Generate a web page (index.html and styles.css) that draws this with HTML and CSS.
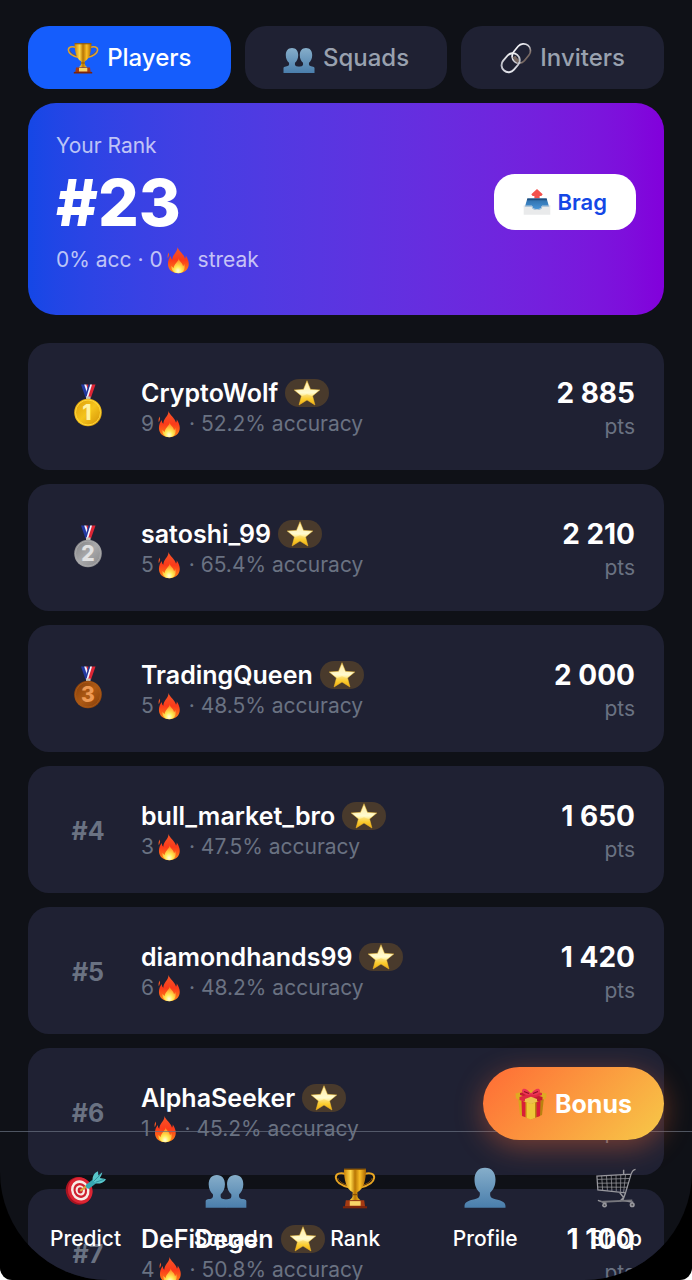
FILE: index.html
```
<!DOCTYPE html>
<html lang="en">
<head>
  <meta charset="UTF-8">
  <meta name="viewport" content="width=device-width, initial-scale=1.0">
  <title>Leaderboard</title>
  <link rel="stylesheet" href="styles.css">
</head>
<body>

  <!-- icons -->
  <svg class="sprite" aria-hidden="true">
    <defs>
      <linearGradient id="gold" x1="0" x2="1" y1="0" y2="0">
        <stop offset="0" stop-color="#c98208"/>
        <stop offset=".3" stop-color="#ffd84a"/>
        <stop offset=".5" stop-color="#b87503"/>
        <stop offset=".72" stop-color="#f9bd25"/>
        <stop offset="1" stop-color="#a96500"/>
      </linearGradient>
      <linearGradient id="bust" x1="0" x2="0" y1="0" y2="1">
        <stop offset="0" stop-color="#86aeca"/>
        <stop offset="1" stop-color="#4a7eac"/>
      </linearGradient>
      <linearGradient id="flame" x1="0" x2="0" y1="0" y2="1">
        <stop offset="0" stop-color="#f4582a"/>
        <stop offset=".5" stop-color="#fb3a1a"/>
        <stop offset="1" stop-color="#ff8a16"/>
      </linearGradient>
      <radialGradient id="flame-in" cx=".5" cy=".85" r=".8">
        <stop offset="0" stop-color="#fffde0"/>
        <stop offset=".35" stop-color="#ffec54"/>
        <stop offset="1" stop-color="#ff7a1c"/>
      </radialGradient>
      <linearGradient id="starfill" x1="0" x2="0" y1="0" y2="1">
        <stop offset="0" stop-color="#ffe9a0"/>
        <stop offset=".5" stop-color="#fffbd0"/>
        <stop offset=".75" stop-color="#ffd83c"/>
        <stop offset="1" stop-color="#f0a80c"/>
      </linearGradient>
      <linearGradient id="silver-link" x1="0" x2="1" y1="0" y2="1">
        <stop offset="0" stop-color="#ffffff"/>
        <stop offset=".5" stop-color="#b9bbc4"/>
        <stop offset="1" stop-color="#f1f2f8"/>
      </linearGradient>
      <linearGradient id="dark-link" x1="0" x2="1" y1="0" y2="0">
        <stop offset="0" stop-color="#f4f4f8"/>
        <stop offset=".6" stop-color="#c9c9d0"/>
        <stop offset="1" stop-color="#75655e"/>
      </linearGradient>
      <linearGradient id="m-gold" x1="0" x2="1" y1="0" y2="1">
        <stop offset="0" stop-color="#d99a08"/>
        <stop offset=".5" stop-color="#f5c41c"/>
        <stop offset="1" stop-color="#d08d04"/>
      </linearGradient>
      <linearGradient id="m-silver" x1="0" x2="1" y1="0" y2="1">
        <stop offset="0" stop-color="#7d7d7f"/>
        <stop offset=".5" stop-color="#a9a9ab"/>
        <stop offset="1" stop-color="#848486"/>
      </linearGradient>
      <linearGradient id="m-bronze" x1="0" x2="1" y1="0" y2="1">
        <stop offset="0" stop-color="#7d3807"/>
        <stop offset=".5" stop-color="#ae5a14"/>
        <stop offset="1" stop-color="#813a08"/>
      </linearGradient>
      <linearGradient id="tray" x1="0" x2="0" y1="0" y2="1">
        <stop offset="0" stop-color="#2d6ca8"/>
        <stop offset="1" stop-color="#4d9ee2"/>
      </linearGradient>
    </defs>

    <symbol id="i-trophy" viewBox="0 0 32 32">
      <path d="M9 5.500C5 3.800 1 5 1.400 8.200 1.900 12.300 7.600 14.600 12 15.600M23 5.500C27 3.800 31 5 30.600 8.200 30.100 12.300 24.400 14.600 20 15.600" fill="none" stroke="#e8a522" stroke-width="1.500"/>
      <path d="M3 8.500C3.500 11 7 13 10.500 14M29 8.500C28.500 11 25 13 21.500 14" fill="none" stroke="#9a5a08" stroke-width=".7"/>
      <path d="M7.600 1.500h16.800c0 8-1.700 15.500-6.600 17.700v2.300c0 1.500.8 2.800 2.700 4.100h-9c1.900-1.300 2.700-2.600 2.700-4.100v-2.300C9.300 17 7.600 9.500 7.600 1.500z" fill="url(#gold)"/>
      <path d="M7.600 1.200h16.800v1.100H7.600z" fill="#8f5905"/>
      <path d="M14 20.500h4v1h-4z" fill="#8a5205"/>
      <path d="M9 25.400h14l.7 4.800H8.300z" fill="#a53a12"/>
      <path d="M12 26h8.300v3.500H12z" fill="#f7d568"/>
      <path d="M6.800 29.900h18.400v1.600H6.800z" fill="#7d250b"/>
    </symbol>

    <symbol id="i-squad" viewBox="0 0 32 32">
      <path d="M9 6c4 0 6.200 2.800 6.200 7.200 0 3.600-1.500 6-3.200 7.500-.4 2.600.3 3.500 3 3.800.8.100 1.200.1 1.200.5V31H.5v-5c0-1 1-1.400 2.500-1.600 2.600-.3 3.500-1.200 3-3.700-1.700-1.500-3.200-3.900-3.200-7.500C2.800 8.800 5 6 9 6z" fill="url(#bust)"/>
      <path d="M23 6c4 0 6.200 2.800 6.200 7.200 0 3.600-1.500 6-3.200 7.500-.4 2.500.4 3.400 3 3.700 1.500.2 2.500.6 2.500 1.600v5H16v-6c0-.4.3-.4 1.100-.5 2.600-.3 3.300-1.200 2.900-3.800-1.700-1.500-3.200-3.900-3.200-7.500C16.800 8.800 19 6 23 6z" fill="url(#bust)"/>
    </symbol>

    <symbol id="i-person" viewBox="0 0 32 32">
      <path d="M16 .5c5.100 0 8 3.500 8 9 0 4.700-1.700 8-4 9.900-.4 3 .4 4.300 4 5.100 4.700 1 7.600 2.100 7.600 5.200V31H.4v-1.300c0-3.100 2.900-4.200 7.600-5.200 3.600-.8 4.400-2.100 4-5.100-2.300-1.900-4-5.200-4-9.900 0-5.500 2.900-9 8-9z" fill="url(#bust)"/>
    </symbol>

    <symbol id="i-link" viewBox="0 0 32 32">
      <g fill="none" stroke-width="1.700">
        <rect x="14.300" y="1" width="14" height="21" rx="7" transform="rotate(40 21.300 11.500)" stroke="url(#dark-link)"/>
        <path d="M14 14.500c1 2 2.500 4 4.500 5" stroke="#75655e" stroke-width="3.500"/>
        <rect x="3.700" y="10.500" width="14" height="20.500" rx="7" transform="rotate(40 10.700 20.700)" stroke="url(#silver-link)" stroke-width="1.900"/>
      </g>
    </symbol>

    <symbol id="i-outbox" viewBox="0 0 32 32">
      <path d="M16 1l6.500 6-1.500 2h-2v3h-6V9h-2L9.500 7z" fill="#f4524d"/>
      <path d="M5 12h22l3 10-8 5H10L2 22z" fill="url(#tray)"/>
      <path d="M5 12h22l.6 2H4.400z" fill="#1f4f80"/>
      <path d="M.8 21h9c.7 3 3.200 4.200 6.200 4.200s5.500-1.200 6.200-4.200h9v9.500H.8z" fill="#e9eaeb"/>
      <path d="M.8 20.600h9.500c.3 3 2.700 4 5.700 4s5.400-1 5.700-4h9.500" fill="none" stroke="#d1d5d9"/>
    </symbol>

    <symbol id="i-fire" viewBox="0 0 32 32">
      <path d="M15.500 1c1 4.500 7.500 8 8.500 13.500.7-1 1-2.200.8-3.700C27 14 28.300 17.300 28.300 20.500 28.300 27 23 31 16.300 31S4.500 27 4.500 20.500c0-3.500 1.300-6.500 3.300-9 0 2 .5 3.300 1.700 4.200C9.500 9.500 15.500 7 15.500 1z" fill="url(#flame)"/>
      <path d="M5.500 7.500c-1.500 2.500-1.700 4-1.200 6.500C5.500 12 6.300 10 5.500 7.500z" fill="#ef5624"/>
      <path d="M17 14c0 4 4.500 5 4.700 9 .8-.7 1.300-1.500 1.500-2.500 1.500 6-1 10.500-6.700 10.500s-8.500-3.500-8-8.500c.7 1.200 1.500 2 2.700 2.500C11.200 21 16 18.500 17 14z" fill="url(#flame-in)"/>
    </symbol>

    <symbol id="i-star" viewBox="0 0 32 32">
      <path d="M16 .8l4.300 10.700 11.500.7-8.900 7.400 2.900 11.200L16 24.700l-9.800 6.100 2.900-11.200L.2 12.200l11.500-.7z" fill="url(#starfill)" stroke="#edb830" stroke-width=".6" stroke-linejoin="round"/>
      <path d="M16 17.500L9.500 20 6.200 30.800 16 24.700l9.800 6.100L22.500 20z" fill="#f2b616" opacity=".3"/>
    </symbol>

    <symbol id="i-ribbon" viewBox="0 0 32 44">
      <path d="M9 .5h4l5 13h-4.500z" fill="#2238a0"/>
      <path d="M12.200.500h2.300l4 11-2 2z" fill="#eff0ff"/>
      <path d="M14.300.500h1.900l2.300 7-1 3z" fill="#d92733"/>
      <path d="M23.500.500h-4l-5 13H19z" fill="#df2635"/>
      <path d="M20 .500h-2l-4 13h2z" fill="#f3f3ff"/>
      <path d="M18 .500h-1.400l-3 10 .9 2.500z" fill="#1d3698"/>
      <path d="M14 12.500h4.500v3H14z" fill="#c7c3ba"/>
    </symbol>

    <symbol id="i-gift" viewBox="0 0 32 32">
      <path d="M3 9l13 6v16.500L5 27z" fill="#d9a51c"/>
      <path d="M29 9l-13 6v16.500L27 27z" fill="#b8820f"/>
      <path d="M.500 5.500L15 2l16.500 3.500-.5 5-15 5.500L1 10.500z" fill="#e0aa22"/>
      <path d="M6.500 12.500l4 1.800v15l-3.500-1.400zM25.500 12.500l-4 1.800v15l3.500-1.400z" fill="#d91d37"/>
      <path d="M12 14.500l4 1.500 4-1.500V30l-4 1.500L12 30z" fill="#efc638"/>
      <path d="M5 5l5-1.200L27.500 9v3l-4 1.300L5 7z" fill="#c51a32"/>
      <path d="M27 5l-5-1.200L4.500 9v3l4 1.300L27 7z" fill="#df2843"/>
      <path d="M16 5.500C12 0 7.500-.500 7 2.500S11 8 16 6.500c5 1.500 9.500-1 9-4S20 0 16 5.500z" fill="#ed3554"/>
      <path d="M9 3.500l5 2M23 3.500l-5 2" stroke="#8d1024" stroke-width="1.200"/>
      <path d="M10 11l6-2.300L22 11v2.500L16 16l-6-2.500z" fill="#edc14b"/>
    </symbol>

    <symbol id="i-target" viewBox="0 0 44 38">
      <ellipse cx="14.500" cy="22" rx="13.500" ry="14.700" transform="rotate(-25 14.500 22)" fill="#a71320"/>
      <ellipse cx="16" cy="21.500" rx="12.700" ry="14" transform="rotate(-25 16 21.500)" fill="#dc2533"/>
      <ellipse cx="16" cy="21.500" rx="9.500" ry="10.800" transform="rotate(-25 16 21.500)" fill="#f7ece6"/>
      <ellipse cx="16" cy="21.500" rx="7" ry="8" transform="rotate(-25 16 21.500)" fill="#cf202f"/>
      <ellipse cx="16" cy="21.500" rx="4.800" ry="5.500" transform="rotate(-25 16 21.500)" fill="#f7ece6"/>
      <ellipse cx="16" cy="21.500" rx="2.700" ry="3.200" fill="#cb1d2c"/>
      <path d="M16 22l8-6" stroke="#d8a43b" stroke-width="2.200"/>
      <path d="M22 15.500l8.500-6.500 3.500 4-8.500 6.500c-2 1-4.500-2-3.500-4z" fill="#36a6b0"/>
      <path d="M29 11c-.5-4 1.500-8 5.500-9.500L35 6l4-3.500c-.5 2.500-1 4-2.500 6 2 .3 4 .4 6.500 1.500-3.500 4-7.500 5-11 4z" fill="#58c6cb"/>
      <path d="M30 12l7-7M32 13l9-3" stroke="#23848f" stroke-width=".8"/>
    </symbol>

    <symbol id="i-cart" viewBox="0 0 44 44">
      <g fill="none" stroke="#97979d" stroke-width="1.300">
        <path d="M42.500 2.500c-3.500.5-4 3-5 6L32 27 3 24 2 9.500l36-2"/>
        <path d="M2.300 13l34.400-1M2.500 17l33-.3M2.700 21l31.500.2" stroke-width=".8"/>
        <path d="M7 9.200l1 15.300M12 9l1 15.800M17 8.700l.7 16.500M22 8.500l.3 17M27 8.200l-.3 17.800M32 8l-2 18.500" stroke-width=".8"/>
        <path d="M30 3v5M26 27l4 5-4 4M32 27l-3 8M29 35l11 2M3 35l9 3" stroke-width="1.500"/>
      </g>
      <path d="M4 35.500l35-1.500v2L9 37.500z" fill="#77777d"/>
      <circle cx="10" cy="40" r="2.500" fill="#98989e"/>
      <circle cx="39" cy="39.500" r="2.700" fill="#98989e"/>
      <circle cx="10" cy="40" r=".9" fill="#4c4c51"/>
      <circle cx="39" cy="39.500" r="1" fill="#4c4c51"/>
    </symbol>
  </svg>

  <div class="device">
    <div class="screen">

      <main class="content">
        <!-- tabs -->
        <div class="tabs">
          <button class="tab active" type="button"><svg class="emoji"><use href="#i-trophy"/></svg>Players</button>
          <button class="tab" type="button"><svg class="emoji"><use href="#i-squad"/></svg>Squads</button>
          <button class="tab" type="button"><svg class="emoji"><use href="#i-link"/></svg>Inviters</button>
        </div>

        <!-- your rank -->
        <section class="my_rank">
          <div class="my_info">
            <p class="my_label">Your Rank</p>
            <p class="my_place">#23</p>
            <p class="my_label">0% acc · 0<svg class="fire"><use href="#i-fire"/></svg> streak</p>
          </div>
          <button class="brag" type="button"><svg class="emoji"><use href="#i-outbox"/></svg>Brag</button>
        </section>

        <!-- leaderboard -->
        <ol class="list">
          <li class="row">
            <div class="place">
              <svg class="medal" viewBox="0 0 32 44">
                <use href="#i-ribbon"/>
                <circle cx="16" cy="28.500" r="13.800" fill="url(#m-gold)"/>
                <circle cx="16" cy="28.500" r="12.500" fill="none" stroke="#ffd83e"/>
                <text x="15" y="36" fill="#fff3a4">1</text>
              </svg>
            </div>
            <div class="info">
              <p class="name">CryptoWolf <span class="badge"><svg><use href="#i-star"/></svg></span></p>
              <p class="stats">9<svg class="fire"><use href="#i-fire"/></svg> · 52.2% accuracy</p>
            </div>
            <div class="score"><p class="points">2 885</p><p class="pts">pts</p></div>
          </li>
          <li class="row">
            <div class="place">
              <svg class="medal" viewBox="0 0 32 44">
                <use href="#i-ribbon"/>
                <circle cx="16" cy="28.500" r="13.800" fill="url(#m-silver)"/>
                <circle cx="16" cy="28.500" r="12.500" fill="none" stroke="#a9a9ab"/>
                <text x="16" y="36" fill="#e2e2e3">2</text>
              </svg>
            </div>
            <div class="info">
              <p class="name">satoshi_99 <span class="badge"><svg><use href="#i-star"/></svg></span></p>
              <p class="stats">5<svg class="fire"><use href="#i-fire"/></svg> · 65.4% accuracy</p>
            </div>
            <div class="score"><p class="points">2 210</p><p class="pts">pts</p></div>
          </li>
          <li class="row">
            <div class="place">
              <svg class="medal" viewBox="0 0 32 44">
                <use href="#i-ribbon"/>
                <circle cx="16" cy="28.500" r="13.800" fill="url(#m-bronze)"/>
                <circle cx="16" cy="28.500" r="12.500" fill="none" stroke="#a85818"/>
                <text x="16" y="36" fill="#ee9a55">3</text>
              </svg>
            </div>
            <div class="info">
              <p class="name">TradingQueen <span class="badge"><svg><use href="#i-star"/></svg></span></p>
              <p class="stats">5<svg class="fire"><use href="#i-fire"/></svg> · 48.5% accuracy</p>
            </div>
            <div class="score"><p class="points">2 000</p><p class="pts">pts</p></div>
          </li>
          <li class="row">
            <div class="place">#4</div>
            <div class="info">
              <p class="name">bull_market_bro <span class="badge"><svg><use href="#i-star"/></svg></span></p>
              <p class="stats">3<svg class="fire"><use href="#i-fire"/></svg> · 47.5% accuracy</p>
            </div>
            <div class="score"><p class="points">1 650</p><p class="pts">pts</p></div>
          </li>
          <li class="row">
            <div class="place">#5</div>
            <div class="info">
              <p class="name">diamondhands99 <span class="badge"><svg><use href="#i-star"/></svg></span></p>
              <p class="stats">6<svg class="fire"><use href="#i-fire"/></svg> · 48.2% accuracy</p>
            </div>
            <div class="score"><p class="points">1 420</p><p class="pts">pts</p></div>
          </li>
          <li class="row">
            <div class="place">#6</div>
            <div class="info">
              <p class="name">AlphaSeeker <span class="badge"><svg><use href="#i-star"/></svg></span></p>
              <p class="stats">1<svg class="fire"><use href="#i-fire"/></svg> · 45.2% accuracy</p>
            </div>
            <div class="score"><p class="points"></p><p class="pts">pts</p></div>
          </li>
          <li class="row">
            <div class="place">#7</div>
            <div class="info">
              <p class="name">DeFiDegen <span class="badge"><svg><use href="#i-star"/></svg></span></p>
              <p class="stats">4<svg class="fire"><use href="#i-fire"/></svg> · 50.8% accuracy</p>
            </div>
            <div class="score"><p class="points">1 100</p><p class="pts">pts</p></div>
          </li>
        </ol>
      </main>

      <!-- bottom nav -->
      <nav class="bottom_nav">
        <a href="#predict"><svg><use href="#i-target"/></svg>Predict</a>
        <a href="#squad"><svg><use href="#i-squad"/></svg>Squad</a>
        <a href="#rank"><svg><use href="#i-trophy"/></svg>Rank</a>
        <a href="#profile"><svg><use href="#i-person"/></svg>Profile</a>
        <a href="#shop"><svg><use href="#i-cart"/></svg>Shop</a>
      </nav>

      <button class="bonus" type="button"><svg class="emoji"><use href="#i-gift"/></svg>Bonus</button>
    </div>
  </div>

</body>
</html>
```
FILE: styles.css
```
:root {
    --bg: #0f1117;
    --card: #1f2133;
    --muted: #6a7282;
    --tab-font: #99a1af;
    --blue: #155dfc;
}

* {box-sizing: border-box; margin: 0; padding: 0;}
html {background: #fff;}
body {font-family: Inter, "Liberation Sans", sans-serif; color: #fff;}
button {border: 0; font-family: inherit; cursor: pointer;}
a {color: inherit; text-decoration: none;}
.sprite {position: absolute; width: 0; height: 0;}

/* device */
.device {height: 100vh; background: #000; border-radius: 0 0 12px 12px; overflow: hidden;}
.screen {position: relative; height: 100%; background: var(--bg); border-radius: 0 0 108px 108px; overflow: hidden;}
.content {padding: 26px 28px 0;}

.emoji {width: 32px; height: 32px; flex: none;}
.fire {width: 28px; height: 28px; margin: -4px 0 -4px 1px; vertical-align: -3px;}

/* tabs */
.tabs {display: grid; grid-template-columns: repeat(3, 1fr); gap: 14px;}
.tab {display: flex; align-items: center; justify-content: center; gap: 8px; height: 63px; border-radius: 21px; background: var(--card); color: var(--tab-font); font-size: 24px; font-weight: 500;}
.tab.active {background: var(--blue); color: #fff;}

/* your rank */
.my_rank {display: flex; justify-content: space-between; align-items: flex-start; margin-top: 14px; padding: 29px 28px 41px; border-radius: 28px; background: linear-gradient(to right in oklab, #1447e6, #8200db);}
.my_label {font-size: 21px; line-height: 28px; color: rgba(255, 255, 255, 0.7);}
.my_place {font-size: 64px; line-height: 86px; font-weight: 800;}
.brag {display: flex; align-items: center; gap: 7px; height: 56px; margin-top: 42px; padding: 0 29px; border-radius: 21px; background: #fff; color: #1447e6; font-size: 22px; font-weight: 600;}
.brag .emoji {width: 28px; height: 28px;}

/* leaderboard */
.list {display: flex; flex-direction: column; gap: 14px; margin-top: 28px; list-style: none;}
.row {display: flex; align-items: center; gap: 22px; height: 127px; padding: 3px 29px 0; border-radius: 21px; background: var(--card);}
.place {flex: none; display: flex; justify-content: center; width: 62px; font-size: 25px; font-weight: 700; color: var(--muted);}
.medal {width: 32px; height: 44px; margin-bottom: 4px;}
.medal text {font-size: 21px; font-weight: 800; text-anchor: middle;}
.info {flex: 1;}
.name {display: flex; align-items: center; gap: 7px; font-size: 25px; line-height: 32px; font-weight: 600;}
.badge {display: flex; align-items: center; justify-content: center; width: 44px; height: 28px; border-radius: 14px; background: #493a2c;}
.badge svg {width: 26px; height: 26px;}
.stats {font-size: 21px; line-height: 30px; color: var(--muted);}
.score {padding-top: 2px; text-align: right;}
.points {min-height: 36px; font-size: 28px; line-height: 36px; font-weight: 700;}
.pts {font-size: 21px; line-height: 32px; color: var(--muted);}

/* bottom nav */
.bottom_nav {position: absolute; left: 0; right: 0; bottom: 0; display: flex; justify-content: space-between; height: 149px; padding: 35px 50px 0; border-top: 1px solid rgba(106, 114, 130, 0.7);}
.bottom_nav a {display: flex; flex-direction: column; align-items: center; gap: 16px; font-size: 21px; line-height: 28px; font-weight: 500;}
.bottom_nav svg {width: 42px; height: 42px;}

/* bonus */
.bonus {position: absolute; right: 28px; bottom: 140px; display: flex; align-items: center; gap: 8px; height: 73px; padding: 0 32px; border-radius: 37px; background: linear-gradient(135deg, #ff6b35, #f7c948); box-shadow: 0 7px 28px rgba(255, 107, 53, 0.4); color: #fff; font-size: 25px; font-weight: 700;}
```
